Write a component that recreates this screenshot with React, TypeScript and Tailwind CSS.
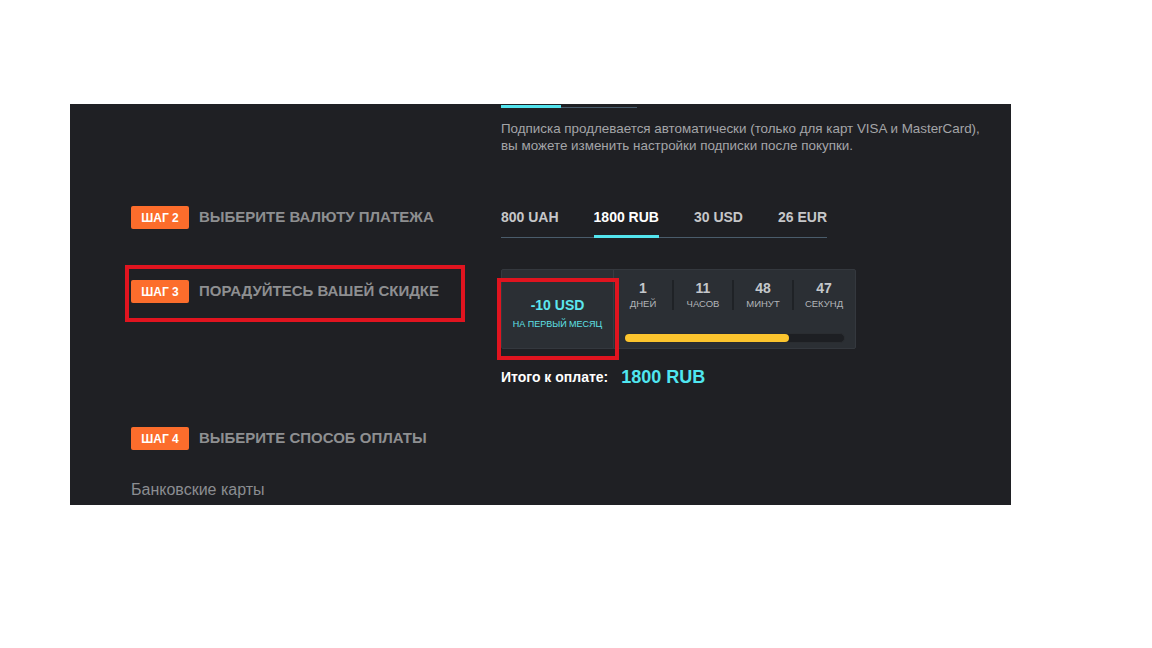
import React from "react";

const font = { fontFamily: '"Liberation Sans", Arial, sans-serif' };

const currencies = ["800 UAH", "1800 RUB", "30 USD", "26 EUR"];

const timer = [
    { value: "1", label: "Дней" },
    { value: "11", label: "Часов" },
    { value: "48", label: "Минут" },
    { value: "47", label: "Секунд" },
];

function Step({ n, title }: { n: number; title: string }) {
    return (
        <div className="flex items-center gap-[10px]">
            <span className="flex h-[23px] w-[58px] items-center justify-center rounded-[2px] bg-[#fc6d2c] text-[12px] font-bold text-white">
                ШАГ {n}
            </span>
            <span className="text-[15px] font-bold uppercase text-[#8e8f91]">{title}</span>
        </div>
    );
}

function Row({ left, right, className = "" }: { left?: React.ReactNode; right?: React.ReactNode; className?: string }) {
    return (
        <div className={"grid grid-cols-[370px_1fr] pl-[61px] " + className}>
            <div className="relative">{left}</div>
            <div className="relative">{right}</div>
        </div>
    );
}

export default function App() {
    return (
        <div className="min-h-[648px] w-[1152px] bg-white pt-[104px]" style={font}>
            <div className="ml-[70px] h-[401px] w-[941px] bg-[#1f2024]">
                <Row
                    right={
                        <div>
                            <div className="relative mt-[1px] h-[3px] w-[136px]">
                                <div className="absolute left-0 top-[2px] h-px w-[136px] bg-[#4a5c6b]" />
                                <div className="absolute left-0 top-0 h-[3px] w-[60px] bg-[#53e4ee]" />
                            </div>
                            <p className="mt-[12px] text-[13.4px] leading-[17px] text-[#a4a5a8]">
                                Подписка продлевается автоматически (только для карт VISA и MasterCard),
                                <br />
                                вы можете изменить настройки подписки после покупки.
                            </p>
                        </div>
                    }
                />

                <Row
                    className="mt-[52px]"
                    left={<Step n={2} title="Выберите валюту платежа" />}
                    right={
                        <div className="flex w-[326px] gap-[35px] border-b border-[#4a5c6b]">
                            {currencies.map((c, i) => (
                                <div key={c} className="relative pb-[8px]">
                                    <span
                                        className={
                                            "block text-[14px] font-bold leading-[23px] " +
                                            (i === 1 ? "text-white" : "text-[#c6c7c9]")
                                        }
                                    >
                                        {c}
                                    </span>
                                    {i === 1 && (
                                        <div className="absolute -bottom-px left-0 h-[3px] w-full bg-[#53e4ee]" />
                                    )}
                                </div>
                            ))}
                        </div>
                    }
                />

                <Row
                    className="mt-[31px]"
                    left={
                        <div className="pt-[11px]">
                            <Step n={3} title="Порадуйтесь вашей скидке" />
                            <div className="pointer-events-none absolute left-[-6px] top-[-4px] h-[57px] w-[340px] border-[4px] border-[#e0141f]" />
                        </div>
                    }
                    right={
                        <div>
                            <div className="relative flex h-[80px] w-[355px] rounded-[2px] border border-[#34383e] bg-[#2b2f34]">
                                <div className="flex w-[112px] flex-col items-center border-r border-[#383c42] pt-[27px]">
                                    <span className="text-[14px] font-bold leading-[16px] text-[#5ce6ef]">-10 USD</span>
                                    <span className="mt-[6px] text-[9px] uppercase leading-[11px] text-[#5fe0e6]">
                                        На первый месяц
                                    </span>
                                </div>
                                <div className="flex flex-1 flex-col">
                                    <div className="mt-[10px] flex">
                                        {timer.map((t, i) => (
                                            <div
                                                key={t.label}
                                                className={
                                                    "flex h-[30px] w-[60px] flex-col items-center " +
                                                    (i < 3 ? "border-r-2 border-[#1f2226]" : "")
                                                }
                                            >
                                                <span className="text-[14px] font-bold leading-[16px] text-[#c4c7cb]">
                                                    {t.value}
                                                </span>
                                                <span className="mt-[2px] text-[9.5px] uppercase leading-[12px] text-[#b2b5b9]">
                                                    {t.label}
                                                </span>
                                            </div>
                                        ))}
                                    </div>
                                    <div className="ml-[10px] mt-[23px] h-[10px] w-[221px] rounded-full border border-[#2a2d31] bg-[#1d1f23]">
                                        <div className="h-full w-[164px] rounded-full bg-[#fcc52e]" />
                                    </div>
                                </div>
                                <div className="pointer-events-none absolute left-[-5px] top-[8px] h-[82px] w-[122px] border-[4px] border-[#e0141f]" />
                            </div>
                            <div className="mt-[17px] flex items-center leading-[22px]">
                                <span className="text-[14px] font-bold text-white">Итого к оплате:</span>
                                <span className="ml-[13px] text-[18px] font-bold text-[#4fe6f0]">1800 RUB</span>
                            </div>
                        </div>
                    }
                />

                <Row className="mt-[39px]" left={<Step n={4} title="Выберите способ оплаты" />} />

                <div className="mt-[30px] pl-[61px] text-[16px] leading-[20px] text-[#8b8d91]">Банковские карты</div>
            </div>
        </div>
    );
}
